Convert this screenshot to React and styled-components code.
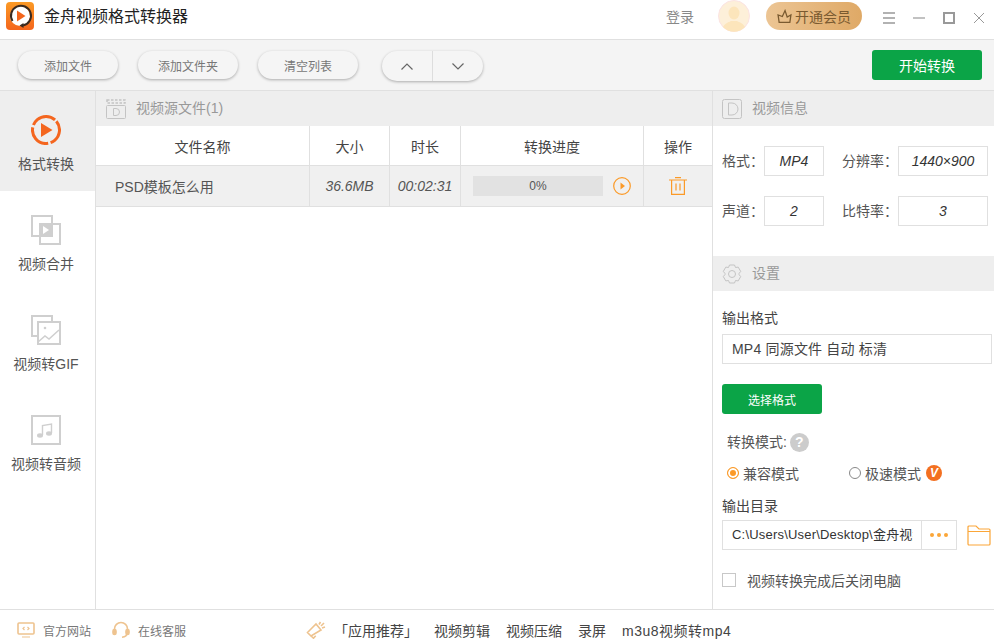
import React from 'react'
import styled, { createGlobalStyle } from 'styled-components'

const GlobalStyle = createGlobalStyle`
  html, body {
    margin: 0;
    padding: 0;
    background: #fff;
  }
  body {
    font-family: "Liberation Sans", "Noto Sans CJK SC", sans-serif;
    color: #333;
  }
  * { box-sizing: border-box; }
`;

const Window = styled.div`
  width: 994px;
  height: 644px;
  display: flex;
  flex-direction: column;
  overflow: hidden;
  background: #fff;
`;

// Title bar
const TitleBar = styled.div`
  height: 40px;
  flex: none;
  display: flex;
  align-items: flex-start;
  border-bottom: 1px solid #e0e0e0;
  padding: 2px 0 0 6px;
`;

const Logo = styled.svg`
  width: 28px;
  height: 28px;
  flex: none;
`;

const AppTitle = styled.div`
  margin: 3px 0 0 10px;
  font-size: 16px;
  line-height: 24px;
  color: #222;
  flex: 1;
`;

const Login = styled.div`
  margin-top: 4px;
  width: 52px;
  font-size: 14px;
  line-height: 22px;
  color: #888;
`;

const Avatar = styled.svg`
  width: 32px;
  height: 32px;
  margin-top: -2px;
  flex: none;
`;

const VipPill = styled.div`
  margin: 0 21px 0 16px;
  width: 96px;
  height: 28px;
  border-radius: 14px;
  background: linear-gradient(90deg, #ecc594, #dfa966);
  color: #7a5a30;
  font-size: 14px;
  display: flex;
  align-items: center;
  justify-content: center;
  gap: 3px;
`;

const WinButton = styled.button`
  width: 12px;
  height: 12px;
  margin: 10px ${({ $gap }) => $gap}px 0 0;
  padding: 0;
  border: none;
  background: none;
  display: flex;
  flex: none;
`;

const WinIcon = styled.svg`
  width: 12px;
  height: 12px;
  stroke: #999;
  fill: none;
`;

// Toolbar
const Toolbar = styled.div`
  height: 51px;
  flex: none;
  display: flex;
  align-items: flex-start;
  gap: 20px;
  background: #f4f4f4;
  border-bottom: 1px solid #e0e0e0;
  padding: 11px 12px 0 18px;
`;

const PillButton = styled.button`
  width: 100px;
  height: 28px;
  border: none;
  border-radius: 14px;
  background: #f5f5f5;
  box-shadow: 0 1px 3px rgba(0, 0, 0, 0.3);
  font: inherit;
  font-size: 12px;
  color: #777;
  padding: 0;
`;

const ArrowGroup = styled.div`
  margin-left: 4px;
  width: 101px;
  height: 30px;
  display: flex;
  border-radius: 15px;
  background: #f5f5f5;
  box-shadow: 0 1px 3px rgba(0, 0, 0, 0.3);
`;

const ArrowButton = styled.button`
  flex: 1;
  border: none;
  background: none;
  padding: 0;
  display: flex;
  align-items: center;
  justify-content: center;
  & + & {
    border-left: 1px solid #ddd;
  }
`;

const ArrowIcon = styled.svg`
  width: 12px;
  height: 7px;
  fill: none;
  stroke: #666;
  stroke-width: 1.2;
`;

const GreenButton = styled.button`
  width: ${({ $wide }) => ($wide ? '110px' : '100px')};
  height: 30px;
  margin-left: ${({ $wide }) => ($wide ? 'auto' : '0')};
  margin-top: ${({ $wide }) => ($wide ? '-1px' : '0')};
  border: none;
  border-radius: 3px;
  background: #0ba447;
  color: #fff;
  font: inherit;
  font-size: ${({ $wide }) => ($wide ? '14px' : '12px')};
  padding: 0;
  flex: none;
`;

// Body
const Body = styled.div`
  flex: 1;
  min-height: 0;
  display: flex;
`;

const Sidebar = styled.div`
  width: 96px;
  flex: none;
  border-right: 1px solid #e0e0e0;
`;

const NavItem = styled.div`
  height: 100px;
  display: flex;
  flex-direction: column;
  align-items: center;
  padding: 24px 3px 0 0;
  background: ${({ $active }) => ($active ? '#eeeeee' : 'transparent')};
`;

const NavIcon = styled.svg`
  width: 30px;
  height: 30px;
  fill: none;
`;

const NavLabel = styled.div`
  margin-top: 9px;
  font-size: 14px;
  line-height: 20px;
  color: #555;
  white-space: nowrap;
`;

const Main = styled.div`
  width: 617px;
  flex: none;
  border-right: 1px solid #e0e0e0;
`;

const SectionHead = styled.div`
  height: 35px;
  display: flex;
  align-items: center;
  gap: 10px;
  padding-left: ${({ $left }) => $left || 9}px;
  background: #eeeeee;
  font-size: 14px;
  color: #999;
`;

const HeadTitle = styled.span`
  margin-top: -3px;
`;

const HeadIcon = styled.svg`
  width: 20px;
  height: 20px;
  flex: none;
  fill: none;
  stroke: #c4c4c4;
`;

const TableRow = styled.div`
  display: grid;
  grid-template-columns: 214px 80px 71px 183px 1fr;
  height: ${({ $head }) => ($head ? 40 : 41)}px;
  border-bottom: 1px solid #e0e0e0;
  background: ${({ $head }) => ($head ? '#fff' : '#f0f0f0')};
`;

const Cell = styled.div`
  display: flex;
  align-items: center;
  justify-content: ${({ $left }) => ($left ? 'flex-start' : 'center')};
  padding-left: ${({ $left }) => ($left ? '19px' : '0')};
  font-size: 14px;
  font-style: ${({ $italic }) => ($italic ? 'italic' : 'normal')};
  color: ${({ $head }) => ($head ? '#444' : '#555')};
  border-right: 1px solid #e0e0e0;
  &:last-child {
    border-right: none;
  }
`;

const ProgressCell = styled(Cell)`
  justify-content: flex-start;
  padding-left: 12px;
  gap: 10px;
`;

const ProgressBar = styled.div`
  width: 130px;
  height: 20px;
  background: #e2e2e2;
  font-size: 12px;
  line-height: 20px;
  text-align: center;
  color: #555;
`;

const OrangeIcon = styled.svg`
  width: ${({ $size }) => $size}px;
  height: ${({ $size }) => $size}px;
  flex: none;
  fill: none;
  stroke: #fb9a28;
`;

// Right panel
const Panel = styled.div`
  flex: 1;
  min-width: 0;
`;

const InfoGrid = styled.div`
  height: 130px;
  padding: 20px 6px 0 9px;
  display: grid;
  grid-template-columns: 42px 60px 74px 90px;
  grid-auto-rows: 30px;
  row-gap: 20px;
  align-items: center;
`;

const InfoLabel = styled.div`
  padding-left: ${({ $indent }) => ($indent ? '18px' : '0')};
  margin-top: -2px;
  font-size: 14px;
  color: #555;
  white-space: nowrap;
`;

const InfoValue = styled.div`
  height: 30px;
  border: 1px solid #e0e0e0;
  font-size: 14px;
  font-style: italic;
  line-height: 28px;
  text-align: center;
  color: #333;
`;

const Settings = styled.div`
  padding: 16px 2px 0 9px;
`;

const FieldLabel = styled.div`
  font-size: 14px;
  line-height: 22px;
  color: #444;
`;

const FormatBox = styled.div`
  margin-top: 5px;
  height: 30px;
  border: 1px solid #e0e0e0;
  padding-left: 9px;
  font-size: 14px;
  letter-spacing: 0.2px;
  line-height: 28px;
  color: #444;
`;

const FormatButtonRow = styled.div`
  margin-top: 20px;
`;

const ModeTitle = styled.div`
  margin: 18px 0 0 5px;
  display: flex;
  align-items: center;
  gap: 3px;
  font-size: 14px;
  line-height: 20px;
  color: #555;
`;

const HelpBadge = styled.span`
  width: 19px;
  height: 19px;
  border-radius: 50%;
  background: #ccc;
  color: #fff;
  font-size: 14px;
  font-weight: bold;
  line-height: 19px;
  text-align: center;
`;

const ModeRow = styled.div`
  margin: 11px 0 0 5px;
  display: flex;
  align-items: center;
  height: 20px;
`;

const ModeOption = styled.div`
  width: ${({ $width }) => $width}px;
  display: flex;
  align-items: center;
  gap: 4px;
  font-size: 14px;
  color: #555;
`;

const Radio = styled.span`
  width: 12px;
  height: 12px;
  flex: none;
  border-radius: 50%;
  border: 1px solid ${({ $on }) => ($on ? '#fb9a28' : '#888')};
  background: ${({ $on }) => ($on ? '#fb9a28' : '#fff')};
  box-shadow: ${({ $on }) => ($on ? 'inset 0 0 0 2px #fff' : 'none')};
`;

const VBadge = styled.span`
  width: 16px;
  height: 16px;
  margin-left: 1px;
  border-radius: 50%;
  background: #f37021;
  color: #fff;
  font-size: 12px;
  font-weight: bold;
  font-style: italic;
  line-height: 16px;
  text-align: center;
`;

const OutputLabel = styled(FieldLabel)`
  margin-top: 12px;
`;

const PathRow = styled.div`
  margin-top: 3px;
  display: flex;
  align-items: center;
`;

const PathBox = styled.div`
  width: 235px;
  height: 30px;
  flex: none;
  display: flex;
  border: 1px solid #e0e0e0;
`;

const PathCell = styled.div`
  width: 199px;
  padding: 0 8px 0 9px;
  border-right: 1px solid #e0e0e0;
`;

const PathText = styled.div`
  overflow: hidden;
  white-space: nowrap;
  font-size: 13px;
  letter-spacing: 0.2px;
  line-height: 28px;
  color: #333;
`;

const Dots = styled.div`
  flex: 1;
  display: flex;
  align-items: center;
  justify-content: center;
  gap: 3px;
`;

const Dot = styled.span`
  width: 4px;
  height: 4px;
  border-radius: 50%;
  background: #fba638;
`;

const FolderIcon = styled.svg`
  width: 24px;
  height: 22px;
  margin-left: 10px;
  fill: none;
  stroke: #fba638;
  stroke-width: 1.2;
`;

const ShutdownRow = styled.div`
  margin-top: 20px;
  display: flex;
  align-items: center;
  gap: 11px;
  font-size: 14px;
  color: #555;
`;

const Checkbox = styled.span`
  width: 14px;
  height: 14px;
  flex: none;
  border: 1px solid #c8c8c8;
`;

// Footer
const Footer = styled.div`
  height: 35px;
  flex: none;
  display: flex;
  align-items: center;
  border-top: 1px solid #e0e0e0;
  padding: 6px 0 0 17px;
`;

const FooterIcon = styled.svg`
  width: ${({ $w }) => $w || 18}px;
  height: 18px;
  flex: none;
  fill: none;
  stroke: #eec38f;
  stroke-width: 1.6;
`;

const FooterLink = styled.div`
  margin-left: 8px;
  width: ${({ $width }) => $width}px;
  flex: none;
  font-size: 12px;
  color: #777;
  white-space: nowrap;
`;

const PromoLabel = styled.div`
  margin-left: 8px;
  width: 100px;
  flex: none;
  font-size: 14px;
  color: #444;
  white-space: nowrap;
`;

const PromoLink = styled.div`
  margin-right: 16px;
  font-size: 14px;
  letter-spacing: ${({ $spaced }) => ($spaced ? '0.5px' : '0')};
  color: #444;
  white-space: nowrap;
`;

const AppLogo = () => (
  <Logo viewBox="0 0 28 28">
    <defs>
      <linearGradient id="logoBg" x1="0" y1="0" x2="0" y2="1">
        <stop offset="0" stopColor="#fb9a26" />
        <stop offset="1" stopColor="#f4651c" />
      </linearGradient>
    </defs>
    <rect width="28" height="28" rx="4" fill="url(#logoBg)" />
    <circle cx="14" cy="14" r="10" fill="#fff" />
    <path d="M6.5 19A10 10 0 1 1 17 23.5" fill="none" stroke="#3a2a20" strokeWidth="2" />
    <path d="M17.5 21l-4 2.5 4 2.5z" fill="#3a2a20" />
    <path d="M11 8.500l8.500 5.500-8.500 5.500z" fill="#f4651c" />
  </Logo>
);

const ConvertIcon = () => (
  <NavIcon viewBox="0 0 30 30">
    <circle cx="15" cy="15" r="13.500" stroke="#f4661f" strokeWidth="3" strokeDasharray="25.800 2.470" transform="rotate(-40 15 15)" />
    <path d="M10 8l11.500 7L10 22z" fill="#f4661f" />
  </NavIcon>
);

const MergeIcon = () => (
  <NavIcon viewBox="0 0 30 30" stroke="#cfcfcf" strokeWidth="2">
    <rect x="1" y="1" width="20" height="20" />
    <rect x="9" y="9" width="20" height="20" fill="#fff" />
    <rect x="8" y="8" width="14" height="14" fill="#cfcfcf" stroke="none" />
    <path d="M12 11l6 4-6 4z" fill="#fff" stroke="none" />
  </NavIcon>
);

const GifIcon = () => (
  <NavIcon viewBox="0 0 30 30" stroke="#cfcfcf" strokeWidth="2">
    <path d="M7 21H1V1h20v6" />
    <rect x="7" y="7" width="22" height="22" />
    <circle cx="14" cy="13" r="1.300" fill="#cfcfcf" stroke="none" />
    <path d="M7 27l7-6 4 3 10-9" strokeWidth="1.500" />
  </NavIcon>
);

const AudioIcon = () => (
  <NavIcon viewBox="0 0 30 30" stroke="#cfcfcf" strokeWidth="2">
    <rect x="1" y="1" width="28" height="28" />
    <path d="M11.500 20V10.500l9-1.500v9" strokeWidth="1.400" />
    <ellipse cx="9" cy="20.500" rx="3" ry="2.200" fill="#cfcfcf" stroke="none" />
    <ellipse cx="18" cy="18.500" rx="3" ry="2.200" fill="#cfcfcf" stroke="none" />
  </NavIcon>
);

const navItems = [
  { label: '格式转换', icon: <ConvertIcon />, active: true },
  { label: '视频合并', icon: <MergeIcon /> },
  { label: '视频转GIF', icon: <GifIcon /> },
  { label: '视频转音频', icon: <AudioIcon /> },
];

const App = () => {
  return (
    <>
      <GlobalStyle />
      <Window>
        <TitleBar>
          <AppLogo />
          <AppTitle>金舟视频格式转换器</AppTitle>
          <Login>登录</Login>
          <Avatar viewBox="0 0 32 32">
            <circle cx="16" cy="16" r="15.500" fill="#fdf0d9" stroke="#fbe3e3" />
            <ellipse cx="16" cy="13" rx="5.500" ry="6.500" fill="#fce5bb" />
            <path d="M5 27c3-5 7-5 8-6h6c1 1 5 1 8 6a15 15 0 0 1-22 0z" fill="#fce5bb" />
          </Avatar>
          <VipPill>
            <svg width="15" height="15" viewBox="0 0 14 14" fill="none" stroke="#7a5a30" strokeWidth="1.200">
              <path d="M2 12.500h10l1-7-3.500 2L7.500 1.500 5 7 1 5.500z" />
            </svg>
            开通会员
          </VipPill>
          <WinButton $gap={18}>
            <WinIcon viewBox="0 0 12 12" strokeWidth="1.500">
              <path d="M0 1h12M0 6h12M0 11h12" />
            </WinIcon>
          </WinButton>
          <WinButton $gap={18}>
            <WinIcon viewBox="0 0 12 12" strokeWidth="1.200">
              <path d="M0 6h12" />
            </WinIcon>
          </WinButton>
          <WinButton $gap={18}>
            <WinIcon viewBox="0 0 12 12" strokeWidth="2">
              <rect x="1" y="1" width="10" height="10" />
            </WinIcon>
          </WinButton>
          <WinButton $gap={9}>
            <WinIcon viewBox="0 0 12 12" strokeWidth="1">
              <path d="M1 1l10 10M11 1L1 11" />
            </WinIcon>
          </WinButton>
        </TitleBar>

        <Toolbar>
          <PillButton>添加文件</PillButton>
          <PillButton>添加文件夹</PillButton>
          <PillButton>清空列表</PillButton>
          <ArrowGroup>
            <ArrowButton>
              <ArrowIcon viewBox="0 0 12 7"><path d="M0.500 6.500L6 1l5.500 5.500" /></ArrowIcon>
            </ArrowButton>
            <ArrowButton>
              <ArrowIcon viewBox="0 0 12 7"><path d="M0.500 0.500L6 6l5.500-5.500" /></ArrowIcon>
            </ArrowButton>
          </ArrowGroup>
          <GreenButton $wide>开始转换</GreenButton>
        </Toolbar>

        <Body>
          <Sidebar>
            {navItems.map((item) => (
              <NavItem key={item.label} $active={item.active}>
                {item.icon}
                <NavLabel>{item.label}</NavLabel>
              </NavItem>
            ))}
          </Sidebar>

          <Main>
            <SectionHead $left={10}>
              <HeadIcon viewBox="0 0 20 20">
                <rect x="0.500" y="6.500" width="19" height="13" rx="1" />
                <path d="M1 1h18v3H1z" strokeDasharray="2.500 1.500" strokeWidth="1.500" />
                <path d="M7.500 9.500h2.500a3.500 3.500 0 0 1 0 7H7.500z" />
              </HeadIcon>
              <HeadTitle>视频源文件(1)</HeadTitle>
            </SectionHead>
            <TableRow $head>
              <Cell $head>文件名称</Cell>
              <Cell $head>大小</Cell>
              <Cell $head>时长</Cell>
              <Cell $head>转换进度</Cell>
              <Cell $head>操作</Cell>
            </TableRow>
            <TableRow>
              <Cell $left>PSD模板怎么用</Cell>
              <Cell $italic>36.6MB</Cell>
              <Cell $italic>00:02:31</Cell>
              <ProgressCell>
                <ProgressBar>0%</ProgressBar>
                <OrangeIcon $size={18} viewBox="0 0 18 18">
                  <circle cx="9" cy="9" r="8.300" strokeWidth="1.200" />
                  <path d="M7.500 5.500L12 9l-4.500 3.500z" fill="#fb9a28" stroke="none" />
                </OrangeIcon>
              </ProgressCell>
              <Cell>
                <OrangeIcon $size={18} viewBox="0 0 18 18" strokeWidth="1.200">
                  <path d="M0 3h18M6 0.600h6M2.600 3v14.400h12.800V3M7 6.500v7M11 6.500v7" />
                </OrangeIcon>
              </Cell>
            </TableRow>
          </Main>

          <Panel>
            <SectionHead>
              <HeadIcon viewBox="0 0 20 20">
                <rect x="0.500" y="0.500" width="19" height="19" rx="2" />
                <path d="M6.500 4h3.500a6 6 0 0 1 0 12H6.500z" />
              </HeadIcon>
              <HeadTitle>视频信息</HeadTitle>
            </SectionHead>
            <InfoGrid>
              <InfoLabel>格式：</InfoLabel>
              <InfoValue>MP4</InfoValue>
              <InfoLabel $indent>分辨率：</InfoLabel>
              <InfoValue>1440×900</InfoValue>
              <InfoLabel>声道：</InfoLabel>
              <InfoValue>2</InfoValue>
              <InfoLabel $indent>比特率：</InfoLabel>
              <InfoValue>3</InfoValue>
            </InfoGrid>
            <SectionHead>
              <HeadIcon viewBox="0 0 20 20">
                <path d="M7.500 1h5l1 2.500 2.700-.4 2.500 4.300L17 9.500v1l1.700 2.100-2.500 4.300-2.700-.4-1 2.500h-5l-1-2.500-2.700.4-2.500-4.300L3 10.500v-1L1.300 7.400l2.500-4.300 2.700.4z" />
                <circle cx="10" cy="10" r="3.500" />
              </HeadIcon>
              <HeadTitle>设置</HeadTitle>
            </SectionHead>
            <Settings>
              <FieldLabel>输出格式</FieldLabel>
              <FormatBox>MP4 同源文件 自动 标清</FormatBox>
              <FormatButtonRow>
                <GreenButton>选择格式</GreenButton>
              </FormatButtonRow>
              <ModeTitle>
                转换模式:
                <HelpBadge>?</HelpBadge>
              </ModeTitle>
              <ModeRow>
                <ModeOption $width={122}>
                  <Radio $on />
                  兼容模式
                </ModeOption>
                <ModeOption $width={110}>
                  <Radio />
                  极速模式
                  <VBadge>V</VBadge>
                </ModeOption>
              </ModeRow>
              <OutputLabel>输出目录</OutputLabel>
              <PathRow>
                <PathBox>
                  <PathCell>
                    <PathText>C:\Users\User\Desktop\金舟视频</PathText>
                  </PathCell>
                  <Dots>
                    <Dot />
                    <Dot />
                    <Dot />
                  </Dots>
                </PathBox>
                <FolderIcon viewBox="0 0 24 22">
                  <path d="M1 20V3a1 1 0 0 1 1-1h7l3 3h10a1 1 0 0 1 1 1v14a1 1 0 0 1-1 1H2a1 1 0 0 1-1-1zM1 7.500h22" />
                </FolderIcon>
              </PathRow>
              <ShutdownRow>
                <Checkbox />
                视频转换完成后关闭电脑
              </ShutdownRow>
            </Settings>
          </Panel>
        </Body>

        <Footer>
          <FooterIcon viewBox="0 0 18 18">
            <rect x="1" y="2" width="16" height="11" rx="1" />
            <path d="M5 16h8M7.500 6L6 7.500 7.500 9M10.500 6L12 7.500 10.500 9" strokeWidth="1.200" />
          </FooterIcon>
          <FooterLink $width={69}>官方网站</FooterLink>
          <FooterIcon viewBox="0 0 18 18">
            <path d="M2.500 11V8a6.500 6.500 0 0 1 13 0v3M15 12c0 3-2 4-5 4.300" />
            <rect x="1" y="8.500" width="3" height="5" rx="1.500" fill="#eec38f" />
            <rect x="14" y="8.500" width="3" height="5" rx="1.500" fill="#eec38f" />
          </FooterIcon>
          <FooterLink $width={168}>在线客服</FooterLink>
          <FooterIcon $w={20} viewBox="0 0 20 18">
            <path d="M1.500 11.500L10 3l5 6-10 6zM5 15l2.500 2.200 2.200-2.500M13 3.500l1.500-2.500M16 7l3-1M15 5l3-3" />
          </FooterIcon>
          <PromoLabel>「应用推荐」</PromoLabel>
          <PromoLink>视频剪辑</PromoLink>
          <PromoLink>视频压缩</PromoLink>
          <PromoLink>录屏</PromoLink>
          <PromoLink $spaced>m3u8视频转mp4</PromoLink>
        </Footer>
      </Window>
    </>
  );
};

export default App;
